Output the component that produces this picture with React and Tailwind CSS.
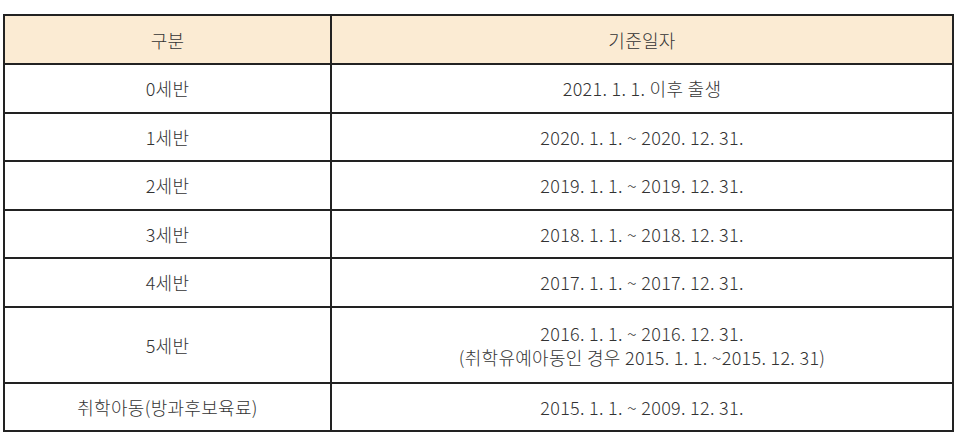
import React from "react";

const rows = [
  { age: "0세반", date: ["2021. 1. 1. 이후 출생"] },
  { age: "1세반", date: ["2020. 1. 1. ~ 2020. 12. 31."] },
  { age: "2세반", date: ["2019. 1. 1. ~ 2019. 12. 31."] },
  { age: "3세반", date: ["2018. 1. 1. ~ 2018. 12. 31."] },
  { age: "4세반", date: ["2017. 1. 1. ~ 2017. 12. 31."] },
  {
    age: "5세반",
    date: ["2016. 1. 1. ~ 2016. 12. 31.", "(취학유예아동인 경우 2015. 1. 1. ~2015. 12. 31)"],
    tall: true,
  },
  { age: "취학아동(방과후보육료)", date: ["2015. 1. 1. ~ 2009. 12. 31."] },
];

const App = () => {
  return (
    <div
      className="bg-white w-[958px] h-[437px] pt-[14px] pl-[3px]"
      style={{ fontFamily: '"Noto Sans CJK KR", "Noto Sans", sans-serif' }}
    >
      <table className="w-[951px] border-collapse text-[18px] font-light tracking-[0.3px] text-[#333] leading-[24px]">
        <thead>
          <tr className="h-[49px] bg-[#fbebd3]">
            <th className="w-[327px] border-2 border-[#222] font-light text-center p-0">구분</th>
            <th className="border-2 border-[#222] font-light text-center p-0">기준일자</th>
          </tr>
        </thead>
        <tbody>
          {rows.map((row) => (
            <tr key={row.age} className={row.tall ? "h-[76px]" : "h-[48.5px]"}>
              <td className="border-2 border-[#222] text-center p-0">{row.age}</td>
              <td className="border-2 border-[#222] text-center p-0">
                {row.date.map((line) => (
                  <div key={line}>{line}</div>
                ))}
              </td>
            </tr>
          ))}
        </tbody>
      </table>
    </div>
  );
};

export default App;
